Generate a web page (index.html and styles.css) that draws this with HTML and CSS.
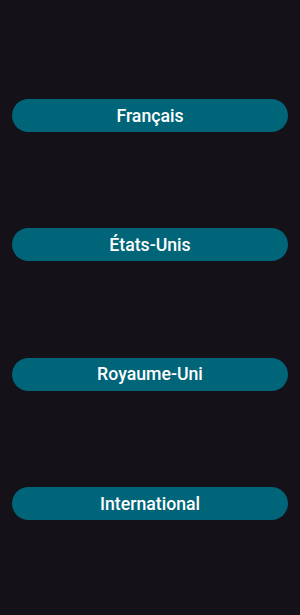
FILE: index.html
```html
<!DOCTYPE html>
<html lang="fr">
<head>
    <meta charset="UTF-8">
    <meta name="viewport" content="width=device-width, initial-scale=1.0">
    <title>Choix</title>
    <link rel="stylesheet" href="styles.css">
</head>
<body>
    <div id="menu">
        <button class="choice">Français</button>
        <button class="choice">États-Unis</button>
        <button class="choice">Royaume-Uni</button>
        <button class="choice">International</button>
    </div>
</body>
</html>
```

FILE: styles.css
```css
html,body{
    margin:0;
    padding:0;
    background:#141218;
}
#menu{
    display:flex;
    flex-direction:column;
    gap:96.4px;
    padding:99px 12px 0;
    height:615px;
    box-sizing:border-box;
}
.choice{
    height:33px;
    border:none;
    border-radius:17px;
    background:#006578;
    color:#fff;
    font-family:Roboto, "Noto Sans", sans-serif;
    font-weight:500;
    font-size:17.7px;
    cursor:pointer;
    padding:0;
}
```
